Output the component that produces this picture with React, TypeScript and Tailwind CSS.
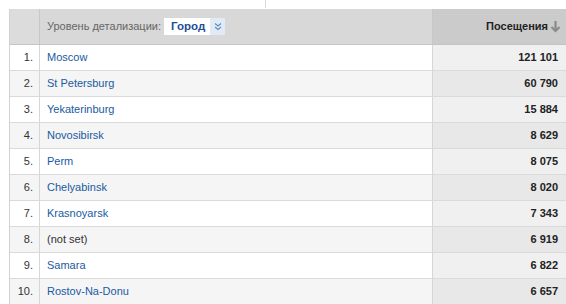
import React from 'react';

const rows = [
  { city: 'Moscow', visits: '121 101' },
  { city: 'St Petersburg', visits: '60 790' },
  { city: 'Yekaterinburg', visits: '15 884' },
  { city: 'Novosibirsk', visits: '8 629' },
  { city: 'Perm', visits: '8 075' },
  { city: 'Chelyabinsk', visits: '8 020' },
  { city: 'Krasnoyarsk', visits: '7 343' },
  { city: '(not set)', visits: '6 919', plain: true },
  { city: 'Samara', visits: '6 822' },
  { city: 'Rostov-Na-Donu', visits: '6 657' },
];

const App = () => {
  return (
    <div className="w-[566px] h-[304px] overflow-hidden bg-white font-['Liberation_Sans',Arial,sans-serif] text-[11px]">
      <div className="h-[9px] flex">
        <div className="w-[265px]" />
        <div className="w-px h-[8px] bg-[#d8d8d8]" />
      </div>

      <div className="ml-[9px] border-l border-[#d2d2d2]">
        {/* header */}
        <div className="flex h-[36px] border-b border-[#c4c4c4]">
          <div className="w-[30px] bg-[#dcdcdc] border-r border-[#c8c8c8]" />
          <div className="w-[393px] bg-[#d8d8d8] border-r border-[#c8c8c8] flex items-center pl-[7px] gap-[3px]">
            <span className="text-[#666]">Уровень детализации:</span>
            <div className="flex h-[17px] bg-white">
              <span className="pl-[7px] pr-[5px] flex items-center font-bold text-[11.5px] text-[#1d4f94]">Город</span>
              <span className="w-[15px] bg-[#e2ebf5] flex items-center justify-center">
                <svg width="8" height="9" viewBox="0 0 8 9" fill="none" stroke="#5a8cc8" strokeWidth="1.1">
                  <path d="M1 1.5l3 2.5 3-2.5" />
                  <path d="M1 5l3 2.5 3-2.5" />
                </svg>
              </span>
            </div>
          </div>
          <div className="flex-1 bg-[#cbcbcb] flex items-center justify-end pr-[5px] gap-[2px]">
            <span className="font-bold text-[#222]">Посещения</span>
            <svg width="11" height="13" viewBox="0 0 11 13" fill="none" stroke="#8a8a8a" strokeWidth="2.2">
              <path d="M5.5 1v10" />
              <path d="M1.5 7L5.5 11l4-4" />
            </svg>
          </div>
        </div>

        {rows.map((r, i) => {
          const even = i % 2 === 1;
          return (
            <div key={i} className="flex h-[26px] border-b border-[#dadada]">
              <div className={`w-[30px] border-r border-[#d6d6d6] flex items-center justify-end pr-[6px] text-[#333] ${even ? 'bg-[#f5f5f5]' : 'bg-white'}`}>
                {i + 1}.
              </div>
              <div className={`w-[393px] border-r border-[#d6d6d6] flex items-center pl-[7px] ${even ? 'bg-[#f5f5f5]' : 'bg-white'}`}>
                <span className={r.plain ? 'text-[#333]' : 'text-[#1a5aa0]'}>{r.city}</span>
              </div>
              <div className={`flex-1 flex items-center justify-end pr-[8px] font-bold text-[#222] ${even ? 'bg-[#e8e8e8]' : 'bg-[#f0f0f0]'}`}>
                {r.visits}
              </div>
            </div>
          );
        })}
      </div>
    </div>
  );
};

export default App;
